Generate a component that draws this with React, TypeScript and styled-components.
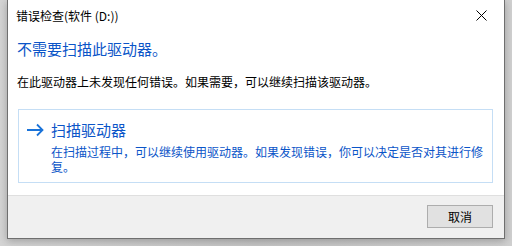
import { createGlobalStyle } from "styled-components";
import styled from "styled-components";

const GlobalStyle = createGlobalStyle`
  html, body {
    margin: 0;
    padding: 0;
    background: #cbcbcb;
    font-family: "Noto Sans CJK SC", "Liberation Sans", sans-serif;
  }
`;

const Desktop = styled.div`
  width: 512px;
  height: 246px;
  overflow: hidden;
  background: linear-gradient(90deg, #d4d4d4, #c6c6c6 50%, #d0d0d0);
`;

const Dialog = styled.div`
  margin-left: 7px;
  width: 496px;
  height: 238px;
  display: flex;
  flex-direction: column;
  background: #fff;
  border: 1px solid #6f6f6f;
  border-top: none;
  box-shadow: 0 2px 8px rgba(0, 0, 0, 0.25);
`;

const TitleBar = styled.div`
  height: 30px;
  display: flex;
  align-items: center;
  justify-content: space-between;
  padding-left: 8px;
  flex-shrink: 0;
`;

const Title = styled.span`
  font-size: 12px;
  color: #000;
  line-height: 16px;
  margin-top: 1px;
`;

const CloseButton = styled.div`
  width: 46px;
  height: 30px;
  display: flex;
  align-items: center;
  justify-content: center;
`;

const Content = styled.div`
  flex: 1;
  padding: 9px 11px 0 9px;
`;

const Heading = styled.div`
  font-size: 15px;
  line-height: 20px;
  color: #0b55c8;
`;

const BodyText = styled.div`
  margin-top: 15px;
  font-size: 12px;
  line-height: 16px;
  color: #000;
`;

const CommandLink = styled.div`
  margin: 19px 0 0 1px;
  height: 74px;
  box-sizing: border-box;
  border: 1px solid #c5def5;
  display: flex;
  padding: 10px 2px 0 7px;
  gap: 7px;
`;

const Arrow = styled.div`
  width: 18px;
  height: 20px;
  display: flex;
  align-items: center;
  flex-shrink: 0;
`;

const LinkText = styled.div`
  display: flex;
  flex-direction: column;
`;

const LinkTitle = styled.div`
  font-size: 15px;
  line-height: 20px;
  color: #0b55c8;
`;

const LinkDesc = styled.div`
  margin-top: 4px;
  font-size: 12px;
  line-height: 15px;
  color: #0b55c8;
`;

const Footer = styled.div`
  height: 42px;
  background: #f0f0f0;
  border-top: 1px solid #dfdfdf;
  display: flex;
  align-items: center;
  justify-content: flex-end;
  padding-right: 11px;
  flex-shrink: 0;
`;

const Button = styled.button`
  width: 66px;
  height: 23px;
  margin-top: -1px;
  background: #e1e1e1;
  border: 1px solid #adadad;
  font-family: inherit;
  font-size: 12px;
  color: #000;
  padding: 0;
`;

export default function App() {
  return (
    <>
      <GlobalStyle />
      <Desktop>
        <Dialog>
          <TitleBar>
            <Title>错误检查(软件 (D:))</Title>
            <CloseButton>
              <svg width="11" height="11" viewBox="0 0 11 11">
                <path d="M0.5 0.5 L10.5 10.5 M10.5 0.5 L0.5 10.5" stroke="#000" strokeWidth="1" />
              </svg>
            </CloseButton>
          </TitleBar>
          <Content>
            <Heading>不需要扫描此驱动器。</Heading>
            <BodyText>在此驱动器上未发现任何错误。如果需要，可以继续扫描该驱动器。</BodyText>
            <CommandLink>
              <Arrow>
                <svg width="18" height="14" viewBox="0 0 18 14">
                  <path d="M1 7 H16.5 M11 1.5 L16.5 7 L11 12.5" stroke="#1a73d9" strokeWidth="1.8" fill="none" />
                </svg>
              </Arrow>
              <LinkText>
                <LinkTitle>扫描驱动器</LinkTitle>
                <LinkDesc>在扫描过程中，可以继续使用驱动器。如果发现错误，你可以决定是否对其进行修复。</LinkDesc>
              </LinkText>
            </CommandLink>
          </Content>
          <Footer>
            <Button>取消</Button>
          </Footer>
        </Dialog>
      </Desktop>
    </>
  );
}
